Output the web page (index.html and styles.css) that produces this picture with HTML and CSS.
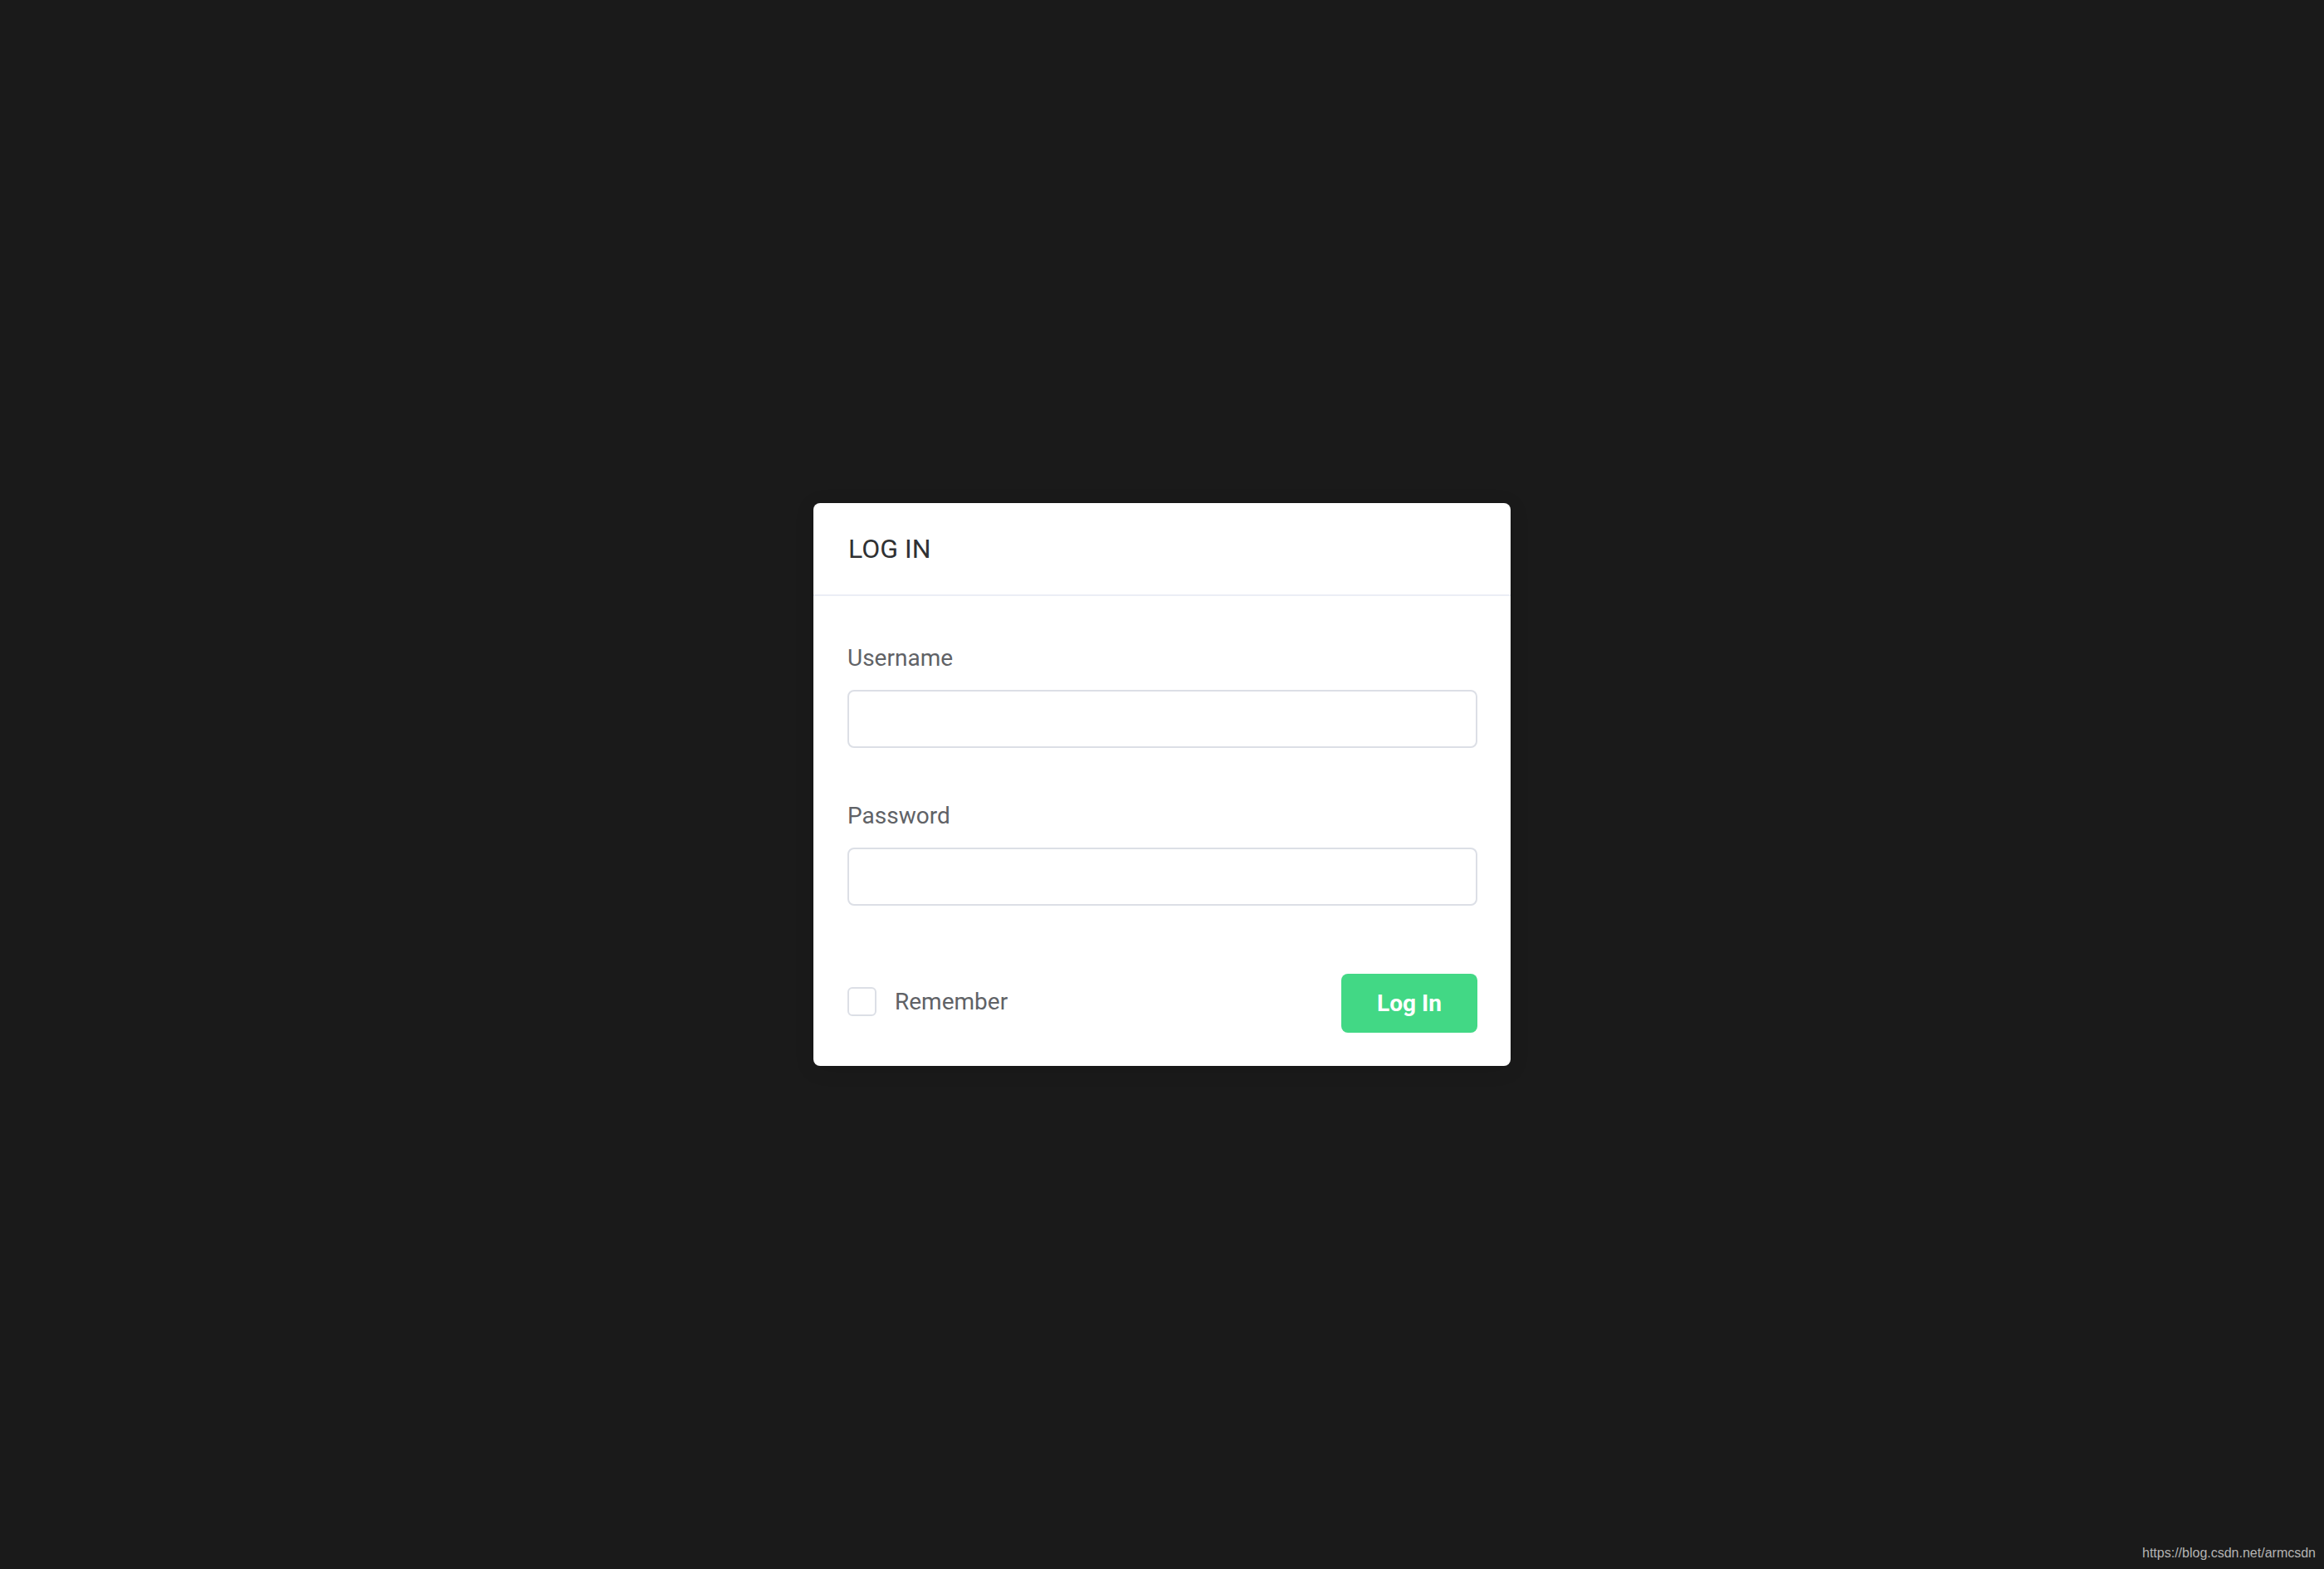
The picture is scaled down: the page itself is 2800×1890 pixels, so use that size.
FILE: index.html
```html
<!DOCTYPE html>
<html lang="en">
<head>
    <meta charset="UTF-8">
    <meta name="viewport" content="width=device-width, initial-scale=1.0">
    <title>Log In</title>
    <link rel="stylesheet" href="styles.css">
</head>
<body>
    <div class="login-card">
        <div class="card-header">LOG IN</div>
        <form class="card-body" id="login-form">
            <div class="form-item">
                <label for="username" class="form-label">Username</label>
                <input type="text" id="username" name="username" class="form-input">
            </div>
            <div class="form-item">
                <label for="password" class="form-label">Password</label>
                <input type="password" id="password" name="password" class="form-input">
            </div>
            <div class="form-actions">
                <label class="remember">
                    <span class="checkbox"></span>
                    <span class="remember-text">Remember</span>
                </label>
                <button type="button" class="btn-login">Log In</button>
            </div>
        </form>
    </div>
    <div class="watermark">https://blog.csdn.net/armcsdn</div>
</body>
</html>
```

FILE: styles.css
```css
html,
body {
    margin: 0;
    height: 100%;
}

body {
    background-color: #1a1a1a;
    font-family: Roboto, "Liberation Sans", sans-serif;
    display: flex;
    align-items: center;
    justify-content: center;
    position: relative;
}

.login-card {
    width: 840px;
    background-color: #fff;
    border-radius: 8px;
    box-shadow: 0 4px 24px rgba(0, 0, 0, 0.1);
    overflow: hidden;
}

.card-header {
    padding: 37px 42px;
    font-size: 32px;
    line-height: 36px;
    color: #303133;
    border-bottom: 2px solid #ebeef5;
}

.card-body {
    padding: 55px 40px 40px 41px;
    margin: 0;
}

.form-item {
    margin-bottom: 62px;
}

.form-item:last-of-type {
    margin-bottom: 0;
}

.form-label {
    display: block;
    font-size: 28px;
    line-height: 40px;
    color: #606266;
    margin-bottom: 18px;
}

.form-input {
    display: block;
    width: 100%;
    height: 70px;
    box-sizing: border-box;
    border: 2px solid #dcdfe6;
    border-radius: 8px;
    background-color: #fff;
    padding: 0 30px;
    font-size: 28px;
    color: #606266;
    outline: none;
}

.form-actions {
    display: flex;
    align-items: center;
    justify-content: space-between;
    margin-top: 82px;
}

.remember {
    display: flex;
    align-items: center;
    gap: 22px;
    margin-top: -4px;
    cursor: pointer;
}

.checkbox {
    width: 35px;
    height: 35px;
    box-sizing: border-box;
    border: 2px solid #dcdfe6;
    border-radius: 6px;
    background-color: #fff;
}

.remember-text {
    font-size: 28px;
    line-height: 40px;
    color: #606266;
}

.btn-login {
    width: 164px;
    height: 71px;
    border: none;
    border-radius: 8px;
    background-color: #42d885;
    color: #fff;
    font-family: Roboto, "Liberation Sans", sans-serif;
    font-size: 28px;
    font-weight: 700;
    padding: 0;
    cursor: pointer;
}

.watermark {
    position: absolute;
    right: 10px;
    bottom: 10px;
    font-family: "Liberation Sans", Arial, sans-serif;
    font-size: 16px;
    color: #b4b4b4;
}
```
